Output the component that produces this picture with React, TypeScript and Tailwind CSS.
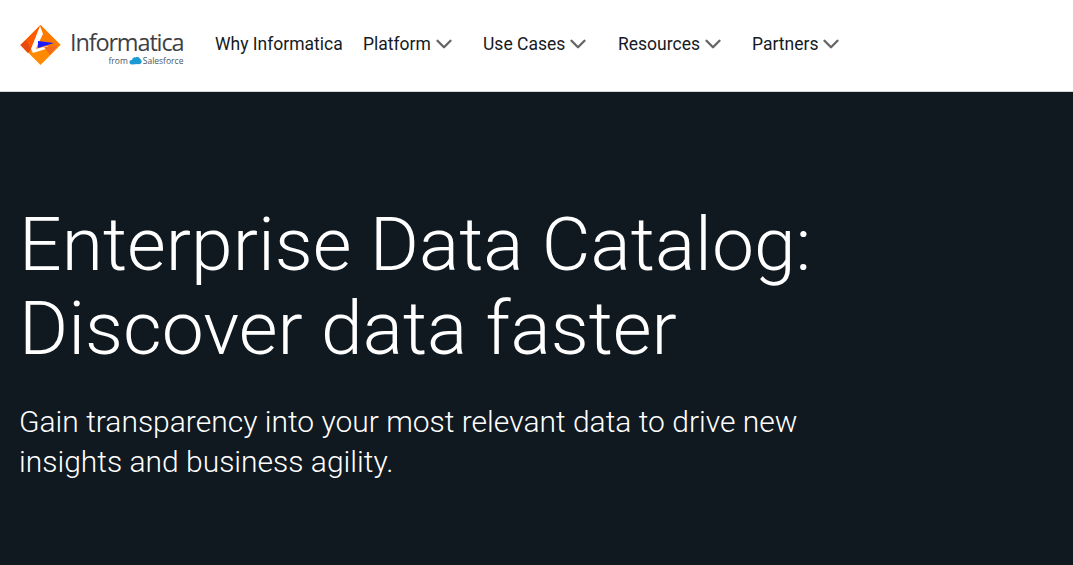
import { ChevronDown } from 'lucide-react';

const navItems = [
  { label: 'Why Informatica', caret: false, width: 'w-[148px]' },
  { label: 'Platform', caret: true, width: 'w-[120px]' },
  { label: 'Use Cases', caret: true, width: 'w-[135px]' },
  { label: 'Resources', caret: true, width: 'w-[134px]' },
  { label: 'Partners', caret: true, width: 'w-[120px]' },
];

function Logo() {
  return (
    <div className="flex items-center w-[195px] shrink-0">
      <svg width="42" height="42" viewBox="0 0 42 42" className="shrink-0 mt-[3px]">
        <polygon points="20.500,0 40.500,20 20.500,40 .5,20" fill="#ff8a00" />
        <polygon points="20.500,0 11,24 8,28 .5,20" fill="#ff5a00" />
        <polygon points=".5,20 8,28 11,24 6,15" fill="#e8490f" />
        <polygon points="20.500,0 40.500,20 24,22 18,14" fill="#ff7a00" />
        <polygon points="20,1 23,9 17,21 16,24 27,21 29,23 13,28 11,24" fill="#ffffff" />
        <polygon points="24,22 38,20.500 30,30" fill="#f26a1b" />
        <polygon points="18,16 34,18 18,23" fill="#1a1aff" />
      </svg>
      <div className="ml-[8px] flex flex-col items-end mt-[6px]">
        <span className="text-[23.5px] leading-[26px] text-[#3f3f46] font-['Open_Sans',sans-serif] font-normal tracking-[-1.15px]">Informatica</span>
        <div className="flex items-center text-[8.5px] leading-[10px] mt-[1px] text-[#4b5563] font-['Open_Sans',sans-serif]">
          <span>from</span>
          <svg width="13" height="9" viewBox="0 0 13 9" className="mx-[1px]">
            <path d="M3 8.500C1 8.500 0 7 .5 5.500 1 4.300 2 4 3 4 3.500 2 5 1 6.500 1.500 8 .5 10.500 1 11 3c1.500.5 2 2 1.500 3.500C12 8 10.500 8.500 9 8Z" fill="#1c9ad6" />
          </svg>
          <span>Salesforce</span>
        </div>
      </div>
    </div>
  );
}

export default function App() {
  return (
    <div className="h-[565px] w-[1073px] overflow-hidden bg-[#101920] font-['Roboto',sans-serif]">
      <header className="flex h-[92px] items-center bg-white border-b border-[#d4d4d4] pl-[20px] pb-[3px]">
        <Logo />
        <nav className="flex items-center">
          {navItems.map(item => (
            <div key={item.label} className={`flex items-center ${item.width}`}>
              <span className="text-[17.5px] leading-[24px] text-[#161a1f]">{item.label}</span>
              {item.caret && <ChevronDown className="text-[#666666]" size={26} strokeWidth={2.2} />}
            </div>
          ))}
        </nav>
      </header>

      <main className="pl-[19px] pt-[110px]">
        <h1 className="text-[75px] leading-[84px] font-light text-white">
          Enterprise Data Catalog:
          <br />
          Discover data faster
        </h1>
        <p className="mt-[32px] w-[800px] text-[30px] leading-[40px] font-light text-white">
          Gain transparency into your most relevant data to drive new insights and business agility.
        </p>
      </main>
    </div>
  );
}
